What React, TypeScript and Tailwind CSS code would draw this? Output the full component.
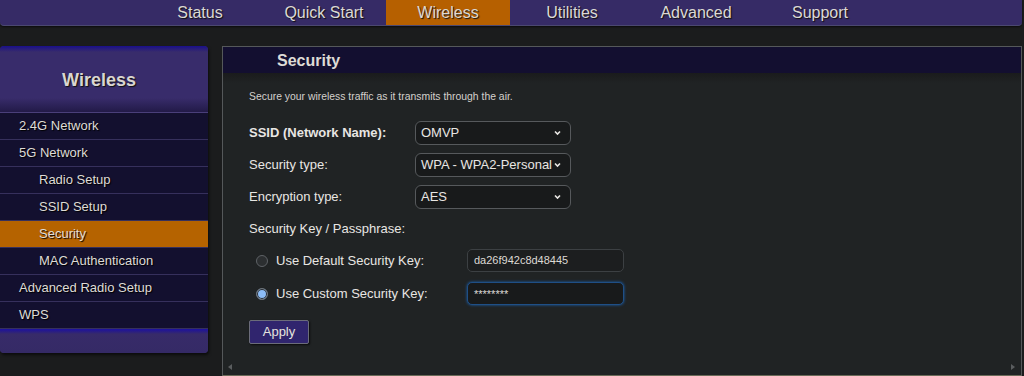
import { useState } from 'react';

const topNav = ['Status', 'Quick Start', 'Wireless', 'Utilities', 'Advanced', 'Support'];

const sideItems = [
  { label: '2.4G Network', sub: false },
  { label: '5G Network', sub: false },
  { label: 'Radio Setup', sub: true },
  { label: 'SSID Setup', sub: true },
  { label: 'Security', sub: true, active: true },
  { label: 'MAC Authentication', sub: true },
  { label: 'Advanced Radio Setup', sub: false },
  { label: 'WPS', sub: false },
];

const Chevron = () => (
  <svg className="absolute right-[9px] top-1/2 -translate-y-1/2" width="7" height="5" viewBox="0 0 7 5">
    <path d="M1 1 L3.5 3.6 L6 1" fill="none" stroke="#e8e6e3" strokeWidth="1.6" />
  </svg>
);

function Select({ value }: { value: string }) {
  return (
    <div className="relative w-[156px] h-[24px] rounded-[6px] border border-[#56595c] bg-[#181a1b] flex items-center pl-[5px] text-[13px] text-[#e8e6e3]">
      {value}
      <Chevron />
    </div>
  );
}

function Radio({ checked, onClick }: { checked: boolean; onClick: () => void }) {
  return (
    <button
      onClick={onClick}
      className={`ml-[7px] w-[12px] h-[12px] rounded-full border ${
        checked
          ? 'border-[#6d7276] bg-[#8cbcf6] shadow-[inset_0_0_0_1px_#24272a]'
          : 'border-[#5e6266] bg-[#2c2f31]'
      }`}
    />
  );
}

export default function App() {
  const [custom, setCustom] = useState(true);

  return (
    <div className="w-[1024px] h-[376px] bg-[#1b1c1d] overflow-hidden font-['Liberation_Sans',Arial,sans-serif] text-[#e8e6e3]">
      {/* top nav */}
      <div className="w-[1022px] h-[26px] bg-[#362b66] rounded-b-[4px] border-b border-[#4b4870] flex pl-[138px] shadow-[0_1px_2px_rgba(0,0,0,0.6)]">
        {topNav.map(n => (
          <div
            key={n}
            className={`w-[124px] h-full flex items-center justify-center text-[16px] text-[#dcd9d4] [text-shadow:1px_1px_1px_#111] ${
              n === 'Wireless' ? 'bg-[#b66000]' : ''
            }`}
          >
            {n}
          </div>
        ))}
      </div>

      <div className="flex mt-[20px] gap-[14px]">
        {/* sidebar */}
        <div className="w-[208px] h-[307px] rounded-[4px] overflow-hidden flex flex-col shadow-[1px_2px_3px_rgba(0,0,0,0.6)] bg-[#362b66]">
          <div className="h-[67px] bg-[linear-gradient(to_bottom,#1a0f8a_0px,#382c6b_6px,#382c6b_52px,#221a48_66px)] flex items-center justify-center pr-[10px] pt-[2px] text-[18px] font-bold text-[#d9d6d1] border-b border-[#4a3f7a] [text-shadow:1px_1px_1px_#111]">
            Wireless
          </div>
          {sideItems.map(it => (
            <div
              key={it.label}
              className={`h-[27px] flex items-center border-b border-[#36305c] text-[13px] ${
                it.sub ? 'pl-[39px]' : 'pl-[19px]'
              } ${it.active ? 'bg-[#b56300] text-[#e3ded6]' : 'bg-[#13102f] text-[#dedbd6]'} [text-shadow:1px_1px_1px_#000]`}
            >
              {it.label}
            </div>
          ))}
          <div className="flex-1 bg-[linear-gradient(to_bottom,#1c10a0_0px,#372b69_5px,#352a66_100%)]" />
        </div>

        {/* main panel */}
        <div className="w-[800px] h-[330px] border border-[#55585a] border-b-[#6a6a58] bg-[#202324] flex flex-col relative">
          <div className="h-[26px] bg-[#130f30] flex items-center pl-[54px] pt-[2px] text-[16px] font-bold text-[#dedbd6]">
            Security
          </div>
          <div className="h-[10px] bg-gradient-to-b from-[#1a1b1c] to-[#202324]" />
          <div className="pl-[26px] pt-[7px] flex flex-col">
            <div className="text-[10.4px] text-[#d4d1cc] leading-[13px]">Secure your wireless traffic as it transmits through the air.</div>

            <div className="flex items-center mt-[18px] h-[24px]">
              <div className="w-[166px] text-[13px] font-bold">SSID (Network Name):</div>
              <Select value="OMVP" />
            </div>
            <div className="flex items-center mt-[8px] h-[24px]">
              <div className="w-[166px] text-[13px]">Security type:</div>
              <Select value="WPA - WPA2-Personal" />
            </div>
            <div className="flex items-center mt-[8px] h-[24px]">
              <div className="w-[166px] text-[13px]">Encryption type:</div>
              <Select value="AES" />
            </div>
            <div className="text-[13px] mt-[12px] leading-[16px]">Security Key / Passphrase:</div>

            <div className="flex items-center mt-[12px] h-[23px]">
              <Radio checked={!custom} onClick={() => setCustom(false)} />
              <div className="ml-[8px] w-[191px] text-[13px]">Use Default Security Key:</div>
              <div className="w-[157px] h-[23px] rounded-[5px] border border-[#3c4043] bg-[#1c1e1f] flex items-center pl-[6px] text-[11px] text-[#dcd9d4]">
                da26f942c8d48445
              </div>
            </div>
            <div className="flex items-center mt-[10px] h-[23px]">
              <Radio checked={custom} onClick={() => setCustom(true)} />
              <div className="ml-[8px] w-[191px] text-[13px]">Use Custom Security Key:</div>
              <div className="w-[157px] h-[23px] rounded-[5px] border border-[#1f4f86] bg-[#181a1b] shadow-[0_0_3px_#1a63b3] flex items-start pt-[3px] pl-[6px] text-[11px] text-[#dcd9d4]">
                ********
              </div>
            </div>

            <button className="mt-[15px] w-[60px] h-[24px] bg-[#30256e] border border-[#6b6c7a] rounded-[2px] text-[13px] text-[#e6e3de] shadow-[1px_1px_2px_rgba(0,0,0,0.7)]">
              Apply
            </button>
          </div>
          <svg className="absolute left-[5px] bottom-[5px]" width="4" height="6" viewBox="0 0 4 6">
            <path d="M4 0 L0 3 L4 6 Z" fill="#5a5d5f" />
          </svg>
          <svg className="absolute right-[6px] bottom-[5px]" width="4" height="6" viewBox="0 0 4 6">
            <path d="M0 0 L4 3 L0 6 Z" fill="#5a5d5f" />
          </svg>
        </div>
      </div>
    </div>
  );
}
